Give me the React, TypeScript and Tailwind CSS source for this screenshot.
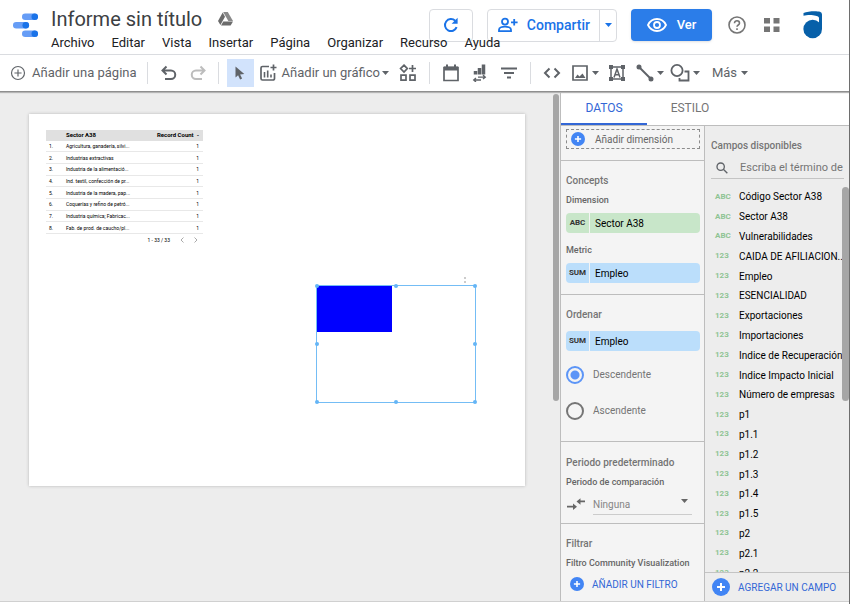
import type { ReactNode } from "react";

const MENU = ["Archivo", "Editar", "Vista", "Insertar", "Página", "Organizar", "Recurso", "Ayuda"];

const TABLE_ROWS = [
  "Agricultura, ganadería, silvi...",
  "Industrias extractivas",
  "Industria de la alimentació...",
  "Ind. textil, confección de pr...",
  "Industria de la madera, pap...",
  "Coquerías y refino de petró...",
  "Industria química; Fabricac...",
  "Fab. de prod. de caucho/pl...",
];

const FIELDS: [string, string][] = [
  ["ABC", "Código Sector A38"],
  ["ABC", "Sector A38"],
  ["ABC", "Vulnerabilidades"],
  ["123", "CAIDA DE AFILIACION.."],
  ["123", "Empleo"],
  ["123", "ESENCIALIDAD"],
  ["123", "Exportaciones"],
  ["123", "Importaciones"],
  ["123", "Indice de Recuperación"],
  ["123", "Indice Impacto Inicial"],
  ["123", "Número de empresas"],
  ["123", "p1"],
  ["123", "p1.1"],
  ["123", "p1.2"],
  ["123", "p1.3"],
  ["123", "p1.4"],
  ["123", "p1.5"],
  ["123", "p2"],
  ["123", "p2.1"],
  ["123", "p2.2"],
];

const HANDLES = [
  "left-0 top-0",
  "left-1/2 top-0",
  "left-full top-0",
  "left-0 top-1/2",
  "left-full top-1/2",
  "left-0 top-full",
  "left-1/2 top-full",
  "left-full top-full",
];

function Svg({ size = 18, className = "", children }: { size?: number; className?: string; children: ReactNode }) {
  return (
    <svg width={size} height={size} viewBox="0 0 18 18" fill="none" stroke="currentColor" strokeWidth="2" className={"shrink-0 " + className} aria-hidden="true">
      {children}
    </svg>
  );
}

function Caret({ className = "" }: { className?: string }) {
  return (
    <svg width="7" height="4" viewBox="0 0 7 4" className={"shrink-0 " + className} aria-hidden="true">
      <path d="M0 0h7L3.5 4z" fill="currentColor" />
    </svg>
  );
}

function PlusDot({ size }: { size: number }) {
  return (
    <svg width={size} height={size} viewBox="0 0 18 18" className="shrink-0" aria-hidden="true">
      <circle cx="9" cy="9" r="9" fill="#4285f4" />
      <path d="M9 5v8M5 9h8" stroke="#fff" strokeWidth="2" />
    </svg>
  );
}

function Divider({ className }: { className: string }) {
  return <div className={"h-[22px] w-px shrink-0 bg-[#dadce0] " + className} />;
}

function Tool({ label, className = "", children }: { label: string; className?: string; children: ReactNode }) {
  return (
    <button type="button" aria-label={label} className={"flex h-7 shrink-0 items-center " + className}>
      {children}
    </button>
  );
}

function Header() {
  return (
    <header className="grid h-[55px] shrink-0 border-b border-[#dadce0]">
      <div className="z-10 col-start-1 row-start-1 flex items-start justify-self-start pl-[13px]">
        <svg width="25" height="24" viewBox="0 0 25 24" className="mt-[13px] shrink-0" aria-hidden="true">
          <g fill="#669df6">
            <rect x="9" y="0.5" width="16" height="6.4" rx="3.2" />
            <rect x="0" y="9" width="16" height="6.4" rx="3.2" />
            <rect x="9" y="17.5" width="16" height="6.4" rx="3.2" />
          </g>
          <g fill="#1a73e8">
            <circle cx="21.8" cy="3.7" r="3.3" />
            <circle cx="12.8" cy="12.2" r="3.3" />
            <circle cx="21.8" cy="20.7" r="3.3" />
          </g>
        </svg>
        <div className="ml-[13px]">
          <div className="flex h-[35px] items-center gap-4 pt-[2px]">
            <h1 className="text-[20px] leading-6 text-[#3c4043]">Informe sin título</h1>
            <svg width="15" height="14" viewBox="0 0 15 14" aria-hidden="true">
              <path d="M5.2 0h4.6l5.2 9h-4.7L5.2 0z" fill="#8a8a8a" />
              <path d="M4.7 0.6L7 4.7 2.4 13 0 9z" fill="#6b6b6b" />
              <path d="M5.3 9.4H15L12.6 13.6H3z" fill="#6b6b6b" />
            </svg>
          </div>
          <nav className="flex gap-[17px] text-[13px] leading-4 text-[#202124]">
            {MENU.map((m) => (
              <button key={m} type="button">{m}</button>
            ))}
          </nav>
        </div>
      </div>
      <div className="col-start-1 row-start-1 mt-[9px] flex h-8 items-center justify-self-end pr-[26px]">
        <button type="button" aria-label="Actualizar" className="flex h-[33px] w-[44px] items-center justify-center rounded border border-[#dadce0] text-[#1a73e8]">
          <svg width="18" height="18" viewBox="0 0 18 18" fill="none" aria-hidden="true">
            <path d="M14.6 11.2A6 6 0 1 1 13.2 4.8" stroke="currentColor" strokeWidth="2" />
            <path d="M15.6 1.8v6H9.6z" fill="currentColor" />
          </svg>
        </button>
        <div className="ml-[14px] flex h-[33px] rounded border border-[#dadce0] text-[#1a73e8]">
          <button type="button" className="flex items-center gap-[9px] pl-[10px] pr-[9px] text-[14px] font-medium">
            <svg width="20" height="16" viewBox="0 0 20 16" fill="none" stroke="currentColor" strokeWidth="1.8" aria-hidden="true">
              <circle cx="7" cy="4.6" r="3" />
              <path d="M1 14.2v-1.5c0-2 3.5-3 6-3s6 1 6 3v1.5zM16.2 2v6.6M13 5.3h6.6" />
            </svg>
            Compartir
          </button>
          <button type="button" aria-label="Más opciones de compartir" className="flex w-[17px] items-center justify-center border-l border-[#dadce0]">
            <Caret />
          </button>
        </div>
        <button type="button" className="ml-[14px] flex h-8 w-[81px] items-center justify-center gap-[10px] rounded bg-[#2b7de9] text-[13px] font-medium text-white shadow">
          <svg width="20" height="14" viewBox="0 0 20 14" fill="none" stroke="currentColor" strokeWidth="1.8" aria-hidden="true">
            <path d="M1 7C2.8 3.2 6.2 1 10 1s7.2 2.2 9 6c-1.8 3.8-5.2 6-9 6S2.8 10.8 1 7z" />
            <circle cx="10" cy="7" r="3" />
          </svg>
          Ver
        </button>
        <button type="button" aria-label="Ayuda" className="ml-4 text-[#757575]">
          <Svg>
            <circle cx="9" cy="9" r="8" strokeWidth="1.6" />
            <path d="M6.5 7.2c0-3.4 5-3.2 5 0 0 1.8-2.5 1.8-2.5 3.6M9 12.3v1.8" strokeWidth="1.6" />
          </Svg>
        </button>
        <button type="button" aria-label="Aplicaciones" className="ml-[18px] text-[#757575]">
          <svg width="16" height="14" viewBox="0 0 16 14" fill="currentColor" aria-hidden="true">
            <path d="M0 0h6v5.5H0zM9.5 0h6v5.5h-6zM0 8.5h6V14H0zM9.5 8.5h6V14h-6z" />
          </svg>
        </button>
        <button type="button" aria-label="Cuenta" className="ml-[23px]">
          <svg width="20" height="28" viewBox="0 0 20 28" fill="#0760a9" aria-hidden="true">
            <circle cx="9.700" cy="18" r="9.300" />
            <path d="M0.500 2C5 0 14 0 17 0.800Q19 1.300 19 3.500V18h-3V7C16 5.400 14 4.600 10 4.200 6 3.900 3 4.200 0.500 4.800z" />
          </svg>
        </button>
      </div>
    </header>
  );
}

function Toolbar() {
  return (
    <div className="z-10 flex h-[37px] shrink-0 items-center border-b border-[#8f8f8f] pl-[10px] text-[13px] text-[#5f6368] shadow-[0_1px_1px_#b5b5b5]">
      <button type="button" className="flex h-7 shrink-0 items-center gap-[6px]">
        <Svg size={16}>
          <circle cx="9" cy="9" r="7.300" strokeWidth="1.300" />
          <path d="M9 5v8M5 9h8" strokeWidth="1.300" />
        </Svg>
        Añadir una página
      </button>
      <Divider className="ml-[10px]" />
      <Tool label="Deshacer" className="ml-3">
        <Svg>
          <path d="M6.500 2.500L2.500 6.500l4 4M2.500 6.500h8.500a4 4 0 0 1 0 8.500H5" />
        </Svg>
      </Tool>
      <Tool label="Rehacer" className="ml-[11px] text-[#bdbdbd]">
        <Svg>
          <path d="M11.500 2.500l4 4-4 4M15.500 6.500H7a4 4 0 0 0 0 8.500h6" />
        </Svg>
      </Tool>
      <Divider className="ml-[11px]" />
      <Tool label="Seleccionar" className="ml-2 w-[27px] justify-center bg-[#d2e3fc]">
        <svg width="10" height="14" viewBox="0 0 10 14" fill="currentColor" aria-hidden="true">
          <path d="M0.500 0.500v11l2.600-2.300 2 4.300 2-1-2-4.100 4.200-.3z" />
        </svg>
      </Tool>
      <button type="button" className="ml-[5px] flex h-7 shrink-0 items-center">
        <Svg className="mr-[5px]">
          <path d="M10 2.500H3.500a1.500 1.500 0 0 0-1.500 1.500v10.500A1.500 1.500 0 0 0 3.500 16H14a1.500 1.500 0 0 0 1.500-1.500V9M14.500 0.500v6M11.500 3.500h6" strokeWidth="1.700" />
          <path d="M5.500 8v5.500M8.700 6.500v7M12 10.500v3" strokeWidth="1.600" />
        </Svg>
        Añadir un gráfico
        <Caret className="ml-[2px]" />
      </button>
      <Tool label="Visualizaciones de la comunidad" className="ml-[10px]">
        <Svg>
          <path d="M5 1.200L8.300 4.600 5 8 1.600 4.600zM13.500 1v7M10 4.500h7M2 11.200h5v5H2zM11 11.200h5v5h-5z" strokeWidth="1.700" />
        </Svg>
      </Tool>
      <Divider className="ml-3" />
      <Tool label="Periodo" className="ml-3">
        <Svg>
          <path d="M2 3.500h14v13H2z" strokeWidth="1.700" />
          <path d="M2 4.500h14" strokeWidth="4" />
          <path d="M5 0.500v4M13 0.500v4" />
        </Svg>
      </Tool>
      <Tool label="Control de datos" className="ml-[11px]">
        <Svg>
          <path d="M4.500 10.500V7M8.500 10.500V4M12.500 10.500V0.500" strokeWidth="3.500" />
          <path d="M7 13.200h7M12 11l2.300 2.200L12 15M3 16h7M5 14l-2.300 2L5 18" strokeWidth="1.300" />
        </Svg>
      </Tool>
      <Tool label="Control de filtros" className="ml-[11px]">
        <Svg>
          <path d="M1 4.500h16M4 9h10M7 13.500h4" />
        </Svg>
      </Tool>
      <Divider className="ml-3" />
      <Tool label="Insertar URL" className="ml-3">
        <Svg>
          <path d="M6.500 4.500L2 9l4.500 4.500M11.500 4.500L16 9l-4.500 4.500" />
        </Svg>
      </Tool>
      <Tool label="Imagen" className="ml-[10px] gap-[3px]">
        <Svg>
          <path d="M2 2h14v14H2z" strokeWidth="1.700" />
          <path d="M4 14l2.500-3.500 2 2L11.500 9.500l3 4.500z" fill="currentColor" stroke="none" />
        </Svg>
        <Caret />
      </Tool>
      <Tool label="Texto" className="ml-[9px]">
        <Svg>
          <path d="M3 3h12v12H3z" strokeWidth="1.500" />
          <path d="M1 1h4v4H1zM13 1h4v4h-4zM1 13h4v4H1zM13 13h4v4h-4z" fill="currentColor" stroke="none" />
          <path d="M6 13.500L9 5l3 8.500M7 10.800h4" strokeWidth="1.500" />
        </Svg>
      </Tool>
      <Tool label="Línea" className="ml-[10px] gap-[3px]">
        <Svg>
          <path d="M3 3l12 12" />
          <circle cx="3" cy="3" r="1.500" fill="currentColor" />
          <circle cx="15" cy="15" r="1.500" fill="currentColor" />
        </Svg>
        <Caret />
      </Tool>
      <Tool label="Forma" className="ml-[6px] gap-[2px]">
        <svg width="21" height="20" viewBox="0 0 21 20" fill="none" stroke="currentColor" strokeWidth="1.800" className="shrink-0" aria-hidden="true">
          <circle cx="7" cy="7.500" r="5.600" />
          <path d="M14.500 8.500h4v9h-9v-2.500" />
        </svg>
        <Caret />
      </Tool>
      <button type="button" className="ml-3 flex h-7 items-center gap-1">
        Más
        <Caret />
      </button>
    </div>
  );
}

function Canvas() {
  return (
    <main className="relative min-w-0 flex-1 overflow-hidden bg-[#ededed]">
      <div className="absolute left-[29px] top-[22px] h-[372px] w-[496px] bg-white shadow-[0_0_3px_#b5b5b5]">
        <div className="absolute left-[17px] top-4 w-[157px] text-[5px] leading-[6px] text-black">
          <table className="h-[104px] w-full border-collapse">
            <thead>
              <tr className="h-[10px] border-b border-[#e0e0e0] bg-[#e0e0e0] text-[6px]">
                <th className="w-5 p-0" />
                <th className="p-0 text-left font-bold">Sector A38</th>
                <th className="p-0 pr-1 text-right font-bold">Record Count&nbsp; -</th>
              </tr>
            </thead>
            <tbody>
              {TABLE_ROWS.map((r, i) => (
                <tr key={r} className="border-b border-[#e8e8e8]">
                  <td className="p-0 pl-[3px]">{i + 1}.</td>
                  <td className="whitespace-nowrap p-0">{r}</td>
                  <td className="p-0 pr-1 text-right">1</td>
                </tr>
              ))}
            </tbody>
          </table>
          <div className="flex h-3 items-center justify-end gap-[10px] pr-[5px]">
            <span>1 - 33 / 33</span>
            <button type="button" aria-label="Anterior">
              <svg width="4" height="6" viewBox="0 0 4 6" fill="none" stroke="#aaa"><path d="M3.500 0.500L1 3l2.500 2.500" /></svg>
            </button>
            <button type="button" aria-label="Siguiente">
              <svg width="4" height="6" viewBox="0 0 4 6" fill="none" stroke="#aaa"><path d="M0.500 0.500L3 3 0.500 5.500" /></svg>
            </button>
          </div>
        </div>
        <div className="absolute left-[435px] top-[163px] h-[6px] border-l-2 border-dotted border-[#ccc]" />
        <div className="absolute left-[287px] top-[171px] h-[118px] w-[160px] border border-[#74bdf5]">
          <div className="h-[46px] w-[75px] bg-[#0000ff]" />
          {HANDLES.map((p) => (
            <span key={p} className={"absolute size-1 -translate-x-1/2 -translate-y-1/2 rounded-sm bg-[#64b5f6] " + p} />
          ))}
        </div>
      </div>
      <div className="absolute right-px top-[2px] h-[307px] w-[6px] rounded-full bg-[#a6a6a6]" />
    </main>
  );
}

function Chip({ type, label, tone }: { type: string; label: string; tone: string }) {
  return (
    <button type="button" className="flex h-5 w-full items-stretch gap-px overflow-hidden rounded-sm text-left">
      <span className={"flex w-[23px] items-center justify-center text-[8px] font-bold text-[#333] " + tone}>{type}</span>
      <span className={"flex flex-1 items-center pl-[5px] text-[10px] text-black " + tone}>{label}</span>
    </button>
  );
}

const SECTION_TITLE = "text-[10px] font-medium leading-5 text-[#757575]";
const SUB_TITLE = "text-[9px] font-medium leading-[18px] text-[#666]";

function DataColumn() {
  return (
    <div className="flex w-36 shrink-0 flex-col border-r border-[#bdbdbd] bg-[#f4f4f4]">
      <section className="border-b border-[#bdbdbd] pb-[11px] pl-[5px] pr-1 pt-[3px]">
        <button type="button" className="flex h-5 w-full items-center gap-[10px] border border-dashed border-[#8c8c8c] pl-1 text-[10px] text-[#666]">
          <PlusDot size={14} />
          Añadir dimensión
        </button>
      </section>
      <section className="border-b border-[#bdbdbd] pb-[11px] pl-[5px] pr-1 pt-[10px]">
        <h2 className={SECTION_TITLE}>Concepts</h2>
        <h3 className={SUB_TITLE}>Dimension</h3>
        <div className="pb-2 pt-1">
          <Chip type="ABC" label="Sector A38" tone="bg-[#c8e6c9]" />
        </div>
        <h3 className={SUB_TITLE}>Metric</h3>
        <div className="pt-1">
          <Chip type="SUM" label="Empleo" tone="bg-[#bbdefb]" />
        </div>
      </section>
      <section className="border-b border-[#bdbdbd] pb-[21px] pl-[5px] pr-1 pt-[10px]">
        <h2 className={SECTION_TITLE}>Ordenar</h2>
        <div className="pt-[6px]">
          <Chip type="SUM" label="Empleo" tone="bg-[#bbdefb]" />
        </div>
        <div className="flex flex-col gap-[18px] pt-[15px] text-[10px] text-[#757575]">
          <label className="flex items-center gap-[9px] leading-[18px]">
            <input type="radio" name="orden" defaultChecked className="size-[18px] appearance-none rounded-full border-2 border-[#757575] checked:border-[#5c95f7] checked:bg-[radial-gradient(#5c95f7_4px,transparent_5px)]" />
            Descendente
          </label>
          <label className="flex items-center gap-[9px] leading-[18px]">
            <input type="radio" name="orden" className="size-[18px] appearance-none rounded-full border-2 border-[#757575] checked:border-[#5c95f7] checked:bg-[radial-gradient(#5c95f7_4px,transparent_5px)]" />
            Ascendente
          </label>
        </div>
      </section>
      <section className="border-b border-[#bdbdbd] pb-2 pl-[5px] pr-3 pt-[11px]">
        <h2 className={SECTION_TITLE}>Periodo predeterminado</h2>
        <label htmlFor="periodo" className={"block " + SUB_TITLE}>Periodo de comparación</label>
        <div className="flex h-6 items-end">
          <svg width="19" height="12" viewBox="0 0 19 12" fill="#666" className="mb-[5px] mr-2 shrink-0" aria-hidden="true">
            <path d="M1 7.800h6V5.500l4 3.200L7 12V9.500H1zM19 2.500h-4.500V0.200L10.500 3.500l4 3.200V4.300H19z" />
          </svg>
          <div className="relative h-6 flex-1 border-b border-[#ccc]">
            <select id="periodo" className="h-[23px] w-full appearance-none bg-transparent text-[10px] text-[#858585]">
              <option>Ninguna</option>
            </select>
            <Caret className="pointer-events-none absolute right-1 top-2 text-[#666]" />
          </div>
        </div>
      </section>
      <section className="pl-[5px] pt-[10px]">
        <h2 className={SECTION_TITLE}>Filtrar</h2>
        <h3 className={SUB_TITLE}>Filtro Community Visualization</h3>
        <button type="button" className="flex h-6 items-center gap-2 pl-1 text-[10px] text-[#3367d6]">
          <PlusDot size={14} />
          AÑADIR UN FILTRO
        </button>
      </section>
    </div>
  );
}

function FieldsColumn() {
  return (
    <div className="relative flex min-w-0 flex-1 flex-col bg-[#ededed]">
      <h2 className="pl-[6px] pt-[10px] text-[10px] font-medium leading-5 text-[#757575]">Campos disponibles</h2>
      <label className="ml-[6px] mr-[5px] flex h-[23px] items-center gap-3 border-b border-[#c4c4c4] pl-[5px] pt-[2px] text-[#5f6368]">
        <Svg size={12}>
          <circle cx="7" cy="7" r="5.500" />
          <path d="M11 11l6 6" />
        </Svg>
        <input type="text" aria-label="Buscar campos" placeholder="Escriba el término de búsqueda" className="min-w-0 flex-1 bg-transparent text-[11px] placeholder:text-[#757575] focus:outline-none" />
      </label>
      <div className="mt-2 min-h-0 flex-1 overflow-hidden">
        <ul className="grid h-[396px] auto-rows-fr text-[10px] text-black">
          {FIELDS.map(([t, n]) => (
            <li key={n} className="flex items-center whitespace-nowrap pl-[10px]">
              <span className="w-6 text-[8px] font-bold text-[#8fc493]">{t}</span>
              {n}
            </li>
          ))}
        </ul>
      </div>
      <div className="absolute right-0 top-[61px] h-[214px] w-[7px] rounded-full bg-[#a6a6a6]" />
      <button type="button" className="flex h-[29px] shrink-0 items-center gap-2 border-t border-[#c4c4c4] pl-[7px] text-[10px] text-[#3367d6]">
        <PlusDot size={18} />
        AGREGAR UN CAMPO
      </button>
    </div>
  );
}

export default function App() {
  return (
    <div className="flex h-screen flex-col overflow-hidden border-r border-[#6e6e6e] bg-white pb-[2px] font-[Roboto,sans-serif]">
      <Header />
      <Toolbar />
      <div className="flex min-h-0 flex-1 border-b border-[#d0d0d0]">
        <Canvas />
        <aside className="flex w-[289px] shrink-0 flex-col border-l border-[#bdbdbd]">
          <div role="tablist" className="flex h-[34px] shrink-0 border-b border-[#bdbdbd] bg-white text-[12px]">
            <button type="button" role="tab" aria-selected="true" className="w-[86px] border-b-2 border-[#3367d6] text-[#3367d6]">DATOS</button>
            <button type="button" role="tab" aria-selected="false" className="w-[86px] border-b-2 border-transparent text-[#757575]">ESTILO</button>
          </div>
          <div className="flex min-h-0 flex-1 overflow-hidden">
            <DataColumn />
            <FieldsColumn />
          </div>
        </aside>
      </div>
    </div>
  );
}
